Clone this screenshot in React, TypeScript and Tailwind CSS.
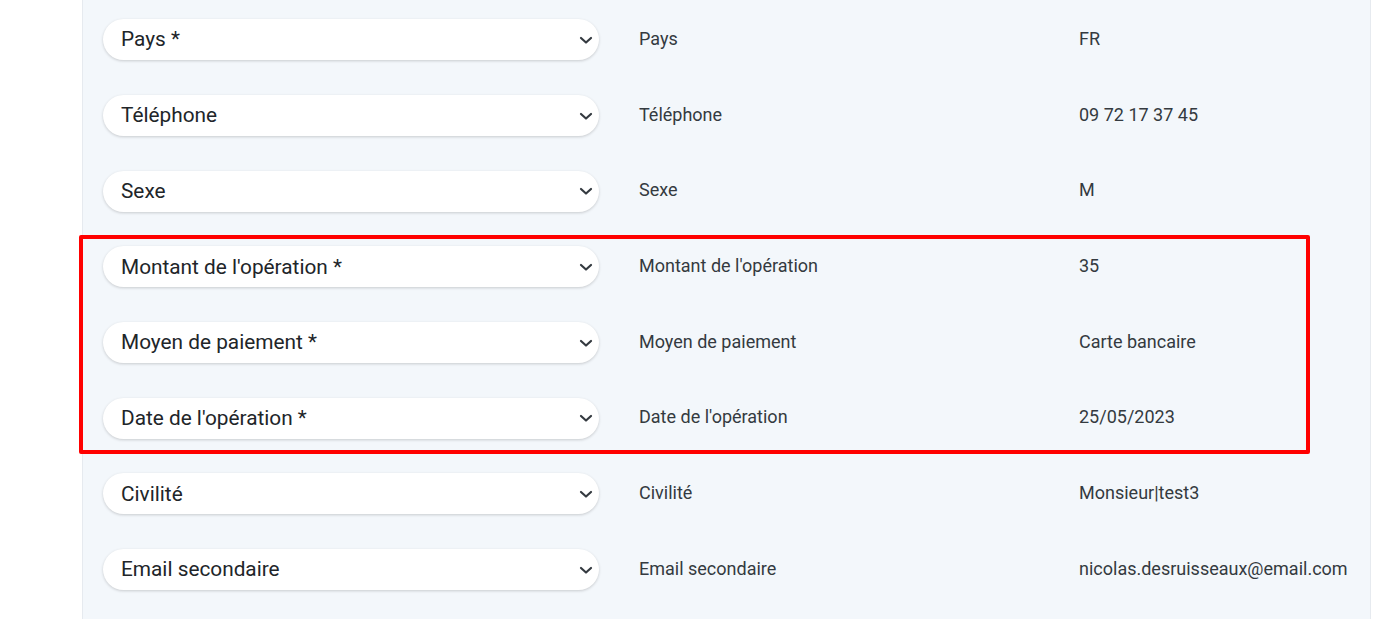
import React from "react";

type Row = { label: string; req?: boolean; value: string };

const rows: Row[] = [
  { label: "Pays", req: true, value: "FR" },
  { label: "Téléphone", value: "09 72 17 37 45" },
  { label: "Sexe", value: "M" },
  { label: "Montant de l'opération", req: true, value: "35" },
  { label: "Moyen de paiement", req: true, value: "Carte bancaire" },
  { label: "Date de l'opération", req: true, value: "25/05/2023" },
  { label: "Civilité", value: "Monsieur|test3" },
  { label: "Email secondaire", value: "nicolas.desruisseaux@email.com" },
];

function Chevron() {
  return (
    <svg width="14" height="10" viewBox="0 0 14 10" className="shrink-0">
      <path d="M2 3 L7 7.5 L12 3" fill="none" stroke="#343a40" strokeWidth="2.2" strokeLinecap="round" strokeLinejoin="round" />
    </svg>
  );
}

function FieldRow({ r }: { r: Row }) {
  return (
    <div className="flex h-[75.7px] items-center">
      <div className="flex h-[41px] w-[496px] shrink-0 items-center justify-between rounded-full bg-white pl-[18px] pr-[6px] shadow-[0_1px_3px_rgba(0,0,0,0.18)]">
        <span className="text-[20.8px] leading-none text-[#212529]">
          {r.label}
          {r.req ? " *" : ""}
        </span>
        <Chevron />
      </div>
      <div className="ml-[40px] w-[440px] shrink-0 -translate-y-[1.5px] text-[18px] leading-none text-[#343a40]">{r.label}</div>
      <div className="-translate-y-[1.5px] text-[18px] leading-none text-[#343a40]">{r.value}</div>
    </div>
  );
}

export default function App() {
  return (
    <div className="h-[619px] w-[1400px] overflow-hidden bg-white font-['Roboto',sans-serif]">
      <div className="ml-[82px] h-full w-[1289px] border-x border-[#e6eaef] bg-[#f3f7fb] pl-[20px] pt-[2px]">
        {rows.slice(0, 3).map((r) => (
          <FieldRow key={r.label} r={r} />
        ))}
        <div className="relative">
          {rows.slice(3, 6).map((r) => (
            <FieldRow key={r.label} r={r} />
          ))}
          <div className="pointer-events-none absolute left-[-24px] top-[6px] h-[219px] w-[1231px] rounded-[2px] border-[4px] border-[#ff0000]" />
        </div>
        {rows.slice(6).map((r) => (
          <FieldRow key={r.label} r={r} />
        ))}
      </div>
    </div>
  );
}
